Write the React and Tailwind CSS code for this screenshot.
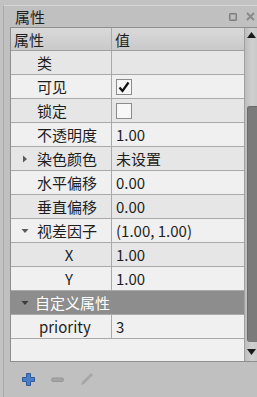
import React from "react";

const rows = [
  { label: "类", value: "", shade: "dark" },
  { label: "可见", value: "check-on", shade: "light" },
  { label: "锁定", value: "check-off", shade: "dark" },
  { label: "不透明度", value: "1.00", shade: "light" },
  { label: "染色颜色", value: "未设置", shade: "dark", arrow: "right" },
  { label: "水平偏移", value: "0.00", shade: "light" },
  { label: "垂直偏移", value: "0.00", shade: "dark" },
  { label: "视差因子", value: "(1.00, 1.00)", shade: "light", arrow: "down" },
  { label: "X", value: "1.00", shade: "dark", child: true },
  { label: "Y", value: "1.00", shade: "light", child: true },
];

function Arrow({ dir, color = "#5a5a5a" }) {
  return (
    <svg width="8" height="8" viewBox="0 0 8 8" className="shrink-0">
      {dir === "right" ? (
        <path d="M2 0.5 L6 4 L2 7.5 Z" fill={color} />
      ) : (
        <path d="M0.5 2 L7.5 2 L4 6 Z" fill={color} />
      )}
    </svg>
  );
}

function CheckBox({ on }) {
  return (
    <div className="w-[16px] h-[16px] border border-[#8c8c8c] bg-[#f7f7f7] flex items-center justify-center">
      {on && (
        <svg width="14" height="14" viewBox="0 0 14 14">
          <path d="M2.5 7.5 L5.5 11 L11.5 2.5" stroke="#111" strokeWidth="2.2" fill="none" />
        </svg>
      )}
    </div>
  );
}

function Row({ row }) {
  const bg = row.shade === "dark" ? "bg-[#e6e6e6]" : "bg-[#f0f0f0]";
  return (
    <div className={`flex h-[24px] border-b border-[#a9a9a9] ${bg}`}>
      <div className="w-[101px] border-r border-[#a9a9a9] flex items-center">
        {row.child ? (
          <span className="w-full text-center pl-[16px]">{row.label}</span>
        ) : (
          <>
            <span className="w-[26px] flex justify-center pl-[1px]">
              {row.arrow && <Arrow dir={row.arrow} />}
            </span>
            <span>{row.label}</span>
          </>
        )}
      </div>
      <div className="flex-1 flex items-center pl-[4px]">
        {row.value === "check-on" && <CheckBox on />}
        {row.value === "check-off" && <CheckBox />}
        {!row.value.startsWith("check") && <span>{row.value}</span>}
      </div>
    </div>
  );
}

export default function App() {
  return (
    <div
      className="w-[257px] h-[397px] overflow-hidden bg-[#c2c2c2] pt-[5px] pl-[3px] text-[15px] text-[#1e1e1e] leading-none"
      style={{ fontFamily: '"Noto Sans CJK SC", "Open Sans", sans-serif' }}
    >
      <div className="h-full border-t border-l border-t-[#d6d6d6] border-l-[#a8a8a8] bg-[#c0c0c0]">
        {/* title bar */}
        <div className="h-[21px] flex items-center pl-[11px] pr-[2px]">
          <span className="text-[15px]">属性</span>
          <div className="ml-auto flex items-center gap-[9px]">
            <div className="w-[8px] h-[8px] bg-[#9a9a9a] border border-[#7e7e7e] rounded-[1px] flex items-center justify-center">
              <div className="w-[4px] h-[4px] bg-[#bdbdbd]" />
            </div>
            <svg width="9" height="9" viewBox="0 0 9 9">
              <path d="M1 1 L8 8 M8 1 L1 8" stroke="#8a8a8a" strokeWidth="2" />
            </svg>
          </div>
        </div>

        {/* property table */}
        <div className="ml-[6px] flex border-t border-b border-l border-[#8e8e8e] h-[335px]">
          <div className="w-[234px] shrink-0 border-r border-[#a0a0a0] flex flex-col bg-[#f0f0f0]">
            <div className="flex h-[23px] border-b border-[#a0a0a0] bg-gradient-to-b from-[#dadada] to-[#c9c9c9]">
              <div className="w-[101px] border-r border-[#a9a9a9] flex items-center pl-[3px]">属性</div>
              <div className="flex-1 flex items-center pl-[3px]">值</div>
            </div>
            {rows.map((r) => (
              <Row key={r.label} row={r} />
            ))}
            <div className="flex items-center h-[24px] bg-[#8d8d8d] border-b border-[#a9a9a9] text-white">
              <span className="w-[24px] flex justify-center pl-[4px]">
                <Arrow dir="down" color="#3c3c3c" />
              </span>
              <span>自定义属性</span>
            </div>
            <div className="flex h-[24px] border-b border-[#a9a9a9] bg-[#f0f0f0]">
              <div className="w-[101px] border-r border-[#a9a9a9] flex items-center pl-[28px]">priority</div>
              <div className="flex-1 flex items-center pl-[4px]">3</div>
            </div>
          </div>

          {/* scrollbar */}
          <div className="w-[14px] shrink-0 flex flex-col bg-gradient-to-r from-[#bdbdbd] via-[#d0d0d0] to-[#c6c6c6]">
            <div className="h-[14px] flex items-center justify-center pr-[2px]">
              <svg width="9" height="6" viewBox="0 0 9 6">
                <path d="M0 6 L4.5 0 L9 6 Z" fill="#1a1a1a" />
              </svg>
            </div>
            <div className="h-[64px]" />
            <div className="h-[236px] ml-[2px] bg-[#7b7b7b] border-l border-t border-[#6a6a6a] rounded-tl-[3px] rounded-bl-[3px]" />
            <div className="flex-1 flex items-center justify-center pr-[2px]">
              <svg width="9" height="6" viewBox="0 0 9 6">
                <path d="M0 0 L9 0 L4.5 6 Z" fill="#1a1a1a" />
              </svg>
            </div>
          </div>
        </div>

        {/* footer tools */}
        <div className="flex items-center h-[34px] pl-[18px] gap-[16px]">
          <svg width="13" height="13" viewBox="0 0 13 13">
            <path d="M4.5 0.5 H8.5 V4.5 H12.5 V8.5 H8.5 V12.5 H4.5 V8.5 H0.5 V4.5 H4.5 Z" fill="#4a7fc8" stroke="#2f5a99" />
          </svg>
          <svg width="13" height="13" viewBox="0 0 13 13">
            <rect x="0.5" y="5" width="12" height="3.5" rx="1.5" fill="#a4a4a4" stroke="#979797" />
          </svg>
          <svg width="14" height="14" viewBox="0 0 14 14">
            <path d="M1 13 L2 10 L11 1 L13 3 L4 12 Z" fill="#a6a6a6" />
          </svg>
        </div>
      </div>
    </div>
  );
}
